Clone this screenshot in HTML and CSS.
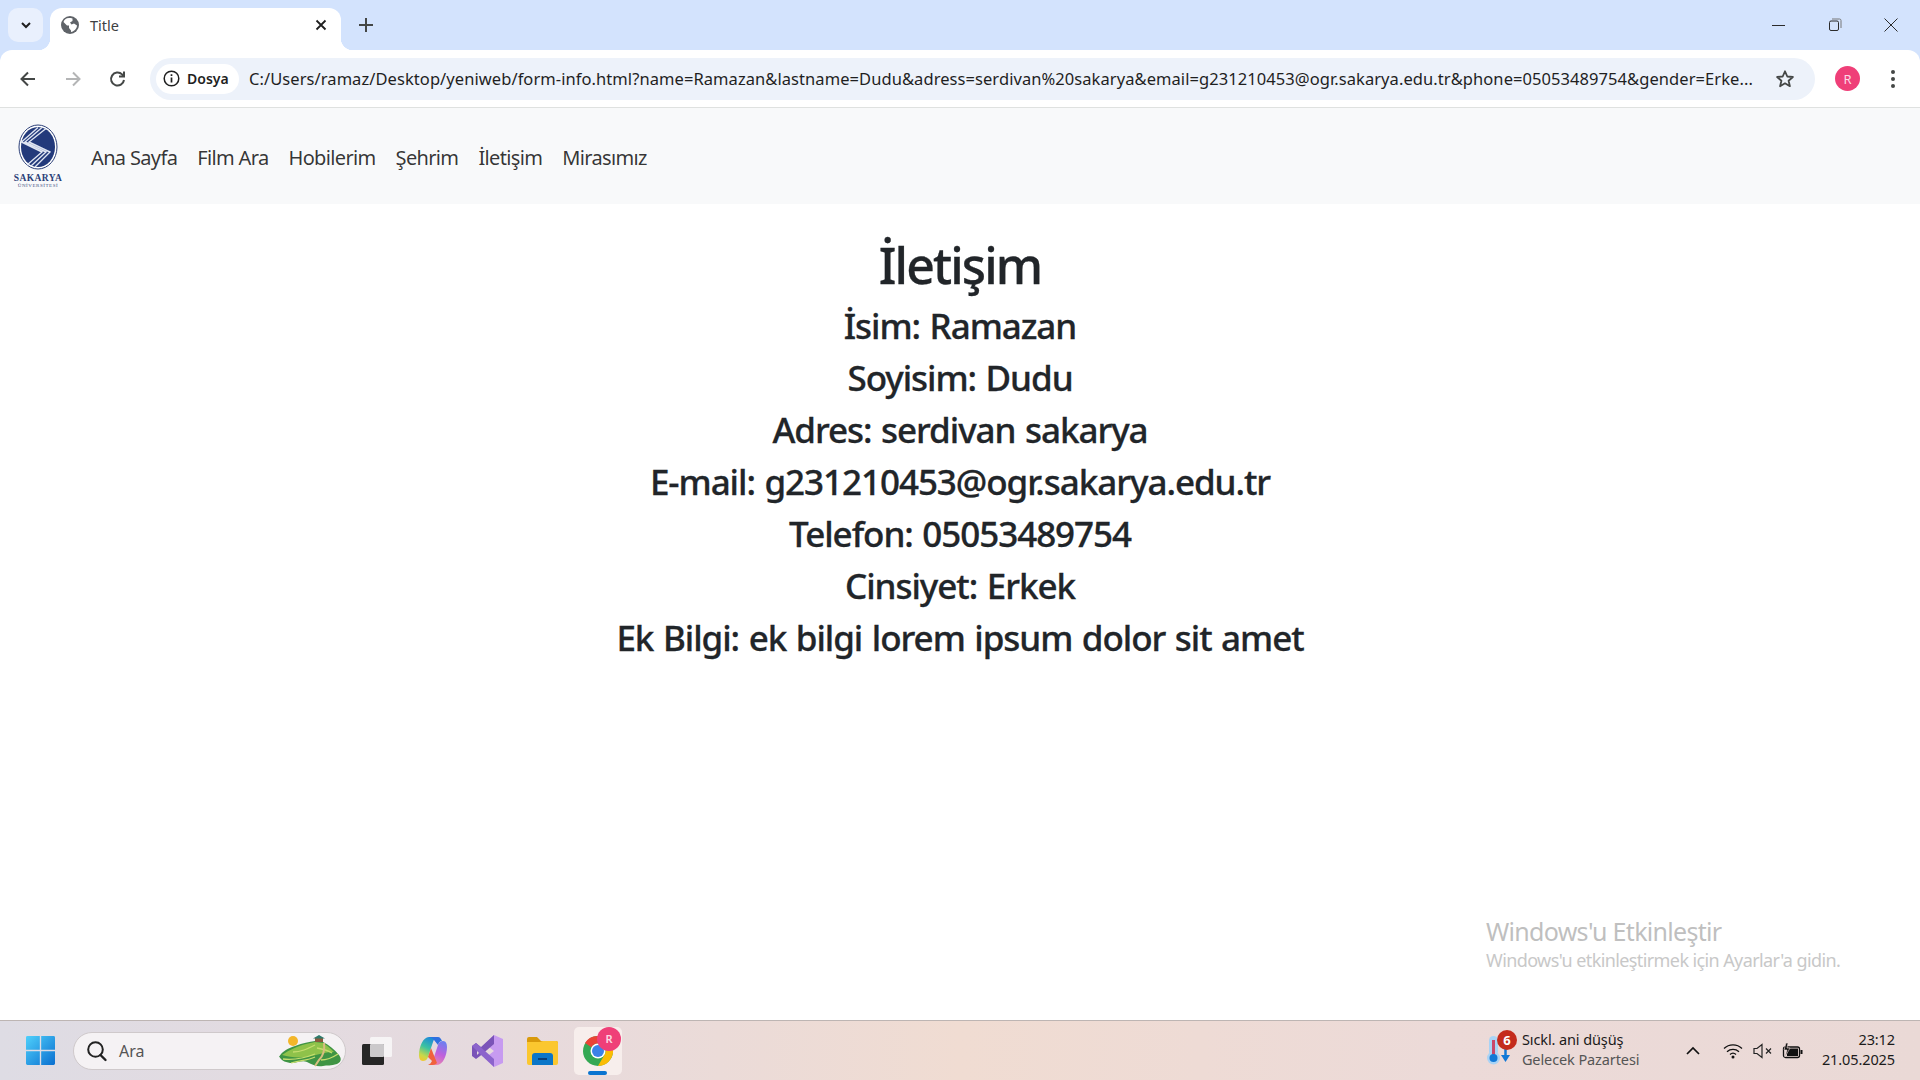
FILE: index.html
```html
<!DOCTYPE html>
<html lang="tr">
<head>
<meta charset="utf-8">
<title>Title</title>
<link rel="stylesheet" href="styles.css">
</head>
<body>
<div class="browser">
  <div class="tabstrip">
    <button class="tabsearch"><svg width="14" height="14" viewBox="0 0 14 14"><path d="M3 5l4 4 4-4" fill="none" stroke="#1f1f1f" stroke-width="2"/></svg></button>
    <div class="tab">
      <svg class="globe" width="18" height="18" viewBox="0 0 18 18"><circle cx="9" cy="9" r="9" fill="#5f6368"/><path d="M8 2C5 2 3 4 2.500 6L6 9.500 8 9.500 8 12 10 14.500 10 16C13 15.500 16 12.500 16 9.500L13 7.500 10.500 8.500 9 6.500 11.500 5 11.500 2.500C10.500 2 9 2 8 2Z" fill="#fff"/></svg>
      <span class="tabtitle">Title</span>
      <svg class="tabclose" width="12" height="12" viewBox="0 0 12 12"><path d="M1.500 1.500l9 9M10.500 1.500l-9 9" stroke="#1f1f1f" stroke-width="1.800"/></svg>
    </div>
    <svg class="newtab" width="14" height="14" viewBox="0 0 14 14"><path d="M7 0v14M0 7h14" stroke="#444746" stroke-width="2"/></svg>
    <div class="winctl">
      <svg width="14" height="14" viewBox="0 0 14 14"><path d="M0 7.500h13" stroke="#2b2b2b" stroke-width="1"/></svg>
      <svg width="14" height="14" viewBox="0 0 14 14"><rect x="1.500" y="3" width="9" height="9.500" rx="1.500" fill="none" stroke="#2b2b2b"/><path d="M4 1h7.500a1.500 1.500 0 0 1 1.500 1.500V10" fill="none" stroke="#777"/></svg>
      <svg width="14" height="14" viewBox="0 0 14 14"><path d="M.5.500l13 13M13.500.500l-13 13" stroke="#2b2b2b"/></svg>
    </div>
  </div>
  <div class="toolbar">
    <svg class="navicon" width="20" height="20" viewBox="0 0 20 20"><path d="M17 10H4M10 3.500L3.500 10l6.500 6.500" fill="none" stroke="#444746" stroke-width="2"/></svg>
    <svg class="navicon" width="20" height="20" viewBox="0 0 20 20"><path d="M3 10h13M10 3.500l6.500 6.500-6.500 6.500" fill="none" stroke="#b4b5b6" stroke-width="2"/></svg>
    <svg class="navicon" width="20" height="20" viewBox="0 0 20 20"><path d="M16 11a6.500 6.500 0 1 1-1.900-5.600L16 7.300M16 2.500v5h-5" fill="none" stroke="#444746" stroke-width="2"/></svg>
    <div class="omnibox">
      <div class="chip">
        <svg width="17" height="17" viewBox="0 0 17 17"><circle cx="8.500" cy="8.500" r="7.300" fill="none" stroke="#1f1f1f" stroke-width="1.500"/><path d="M8.500 7.500v5M8.500 4.300v1.800" stroke="#1f1f1f" stroke-width="1.700"/></svg>
        <span>Dosya</span>
      </div>
      <div class="url">C:/Users/ramaz/Desktop/yeniweb/form-info.html?name=Ramazan&amp;lastname=Dudu&amp;adress=serdivan%20sakarya&amp;email=g231210453@ogr.sakarya.edu.tr&amp;phone=05053489754&amp;gender=Erke...</div>
      <svg class="star" width="20" height="20" viewBox="0 0 20 20"><path d="M10 2.300l2.300 5.200 5.600.5-4.300 3.700 1.300 5.500L10 14.300l-4.900 2.900 1.300-5.500L2.100 8l5.600-.5z" fill="none" stroke="#444746" stroke-width="1.800" stroke-linejoin="round"/></svg>
    </div>
    <div class="avatar">R</div>
    <svg class="kebab" width="6" height="20" viewBox="0 0 6 20"><circle cx="3" cy="3" r="2" fill="#444746"/><circle cx="3" cy="10" r="2" fill="#444746"/><circle cx="3" cy="17" r="2" fill="#444746"/></svg>
  </div>
</div>

<nav class="navbar">
  <div class="logo">
    <svg width="40" height="46" viewBox="0 0 40 46"><ellipse cx="20" cy="23" rx="19" ry="22" fill="#fff" stroke="#2b3f78" stroke-width="1"/><ellipse cx="20" cy="23" rx="17" ry="20" fill="#233a7b"/><path d="M24 3.500L7 18l21 10-15 14M28 4.500L11 18l21 10-15 15M20 3.500L3.500 18 24 28 9 41" fill="none" stroke="#dfe5f2" stroke-width="1.400"/></svg>
    <span class="logo-name">SAKARYA</span>
    <span class="logo-sub">ÜNİVERSİTESİ</span>
  </div>
  <a class="navlink">Ana Sayfa</a>
  <a class="navlink">Film Ara</a>
  <a class="navlink">Hobilerim</a>
  <a class="navlink">Şehrim</a>
  <a class="navlink">İletişim</a>
  <a class="navlink">Mirasımız</a>
</nav>

<main class="content">
  <h1>İletişim</h1>
  <h3>İsim: Ramazan</h3>
  <h3>Soyisim: Dudu</h3>
  <h3>Adres: serdivan sakarya</h3>
  <h3>E-mail: g231210453@ogr.sakarya.edu.tr</h3>
  <h3>Telefon: 05053489754</h3>
  <h3>Cinsiyet: Erkek</h3>
  <h3>Ek Bilgi: ek bilgi lorem ipsum dolor sit amet</h3>
</main>

<div class="watermark">
  <div class="wm-title">Windows'u Etkinleştir</div>
  <div class="wm-sub">Windows'u etkinleştirmek için Ayarlar'a gidin.</div>
</div>

<footer class="taskbar">
  <svg class="start" width="29" height="29" viewBox="0 0 30 30">
    <defs><linearGradient id="win" x1="0" y1="0" x2="1" y2="1"><stop offset="0" stop-color="#4fd0fb"/><stop offset="1" stop-color="#0a6fd0"/></linearGradient></defs>
    <path d="M0 1.500A1.500 1.500 0 0 1 1.500 0H14.300V14.300H0zM15.700 0H28.500A1.500 1.500 0 0 1 30 1.500V14.300H15.700zM0 15.700H14.300V30H1.500A1.500 1.500 0 0 1 0 28.500zM15.700 15.700H30V28.500A1.500 1.500 0 0 1 28.500 30H15.700z" fill="url(#win)"/>
  </svg>
  <div class="search">
    <svg width="22" height="22" viewBox="0 0 22 22"><circle cx="9.500" cy="9.500" r="7.300" fill="none" stroke="#222" stroke-width="2"/><path d="M14.500 15l5 5" stroke="#222" stroke-width="2.400" stroke-linecap="round"/></svg>
    <span class="search-text">Ara</span>
    <svg class="scene" width="62" height="32" viewBox="0 0 62 32">
      <circle cx="14" cy="6" r="5" fill="#f3b62a"/>
      <path d="M0 22C3 16 10 13 16 11 24 8 30 7 36 6l8 1C50 10 56 15 60 20c3 4 2 7-2 9-6 2-10 1-14 2-6 1-10-1-16-4-5-2-10 1-15 1-5 0-11-2-13-7z" fill="#3f9444"/>
      <path d="M3 20C10 15 20 10 36 7l8 1c5 3 8 6 11 9-8 0-14 2-22 4-10 2-20 2-30-1z" fill="#8fc24a"/>
      <path d="M4 24c10 1 22-1 32-5M12 28c8-3 16-2 24-6M42 25c6 0 11-2 17-6M38 13c6 1 10 2 15 5M14 17c8 0 14-3 22-7" fill="none" stroke="#c5dd6e" stroke-width="1.300"/>
      <path d="M45 8c1 7-1 13-5 17l-4 6" fill="none" stroke="#d8bd80" stroke-width="2"/>
      <rect x="36" y="3" width="8" height="4" fill="#8a5a3c"/>
      <path d="M34 3.500l6-3.500 6 3.500z" fill="#2d7a6b"/>
    </svg>
  </div>
  <svg class="tb-icon taskview" width="30" height="28" viewBox="0 0 30 28"><rect x="8" y="0" width="22" height="20" rx="1.500" fill="#f6f4f5"/><rect x="0" y="7" width="22" height="21" rx="1.500" fill="#262626"/><rect x="8" y="7" width="14" height="13" rx="1" fill="#cbc9cb"/></svg>
  <svg class="tb-icon copilot" width="28" height="30" viewBox="0 0 28 30">
    <defs>
      <linearGradient id="co1" x1=".6" y1="0" x2=".2" y2="1"><stop offset="0" stop-color="#1c86dc"/><stop offset=".45" stop-color="#3cc3a0"/><stop offset=".8" stop-color="#c8d84a"/><stop offset="1" stop-color="#f2c830"/></linearGradient>
      <linearGradient id="co2" x1=".7" y1="0" x2=".3" y2="1"><stop offset="0" stop-color="#6d7ef0"/><stop offset=".5" stop-color="#c060dc"/><stop offset="1" stop-color="#f08aa8"/></linearGradient>
    </defs>
    <path d="M10 1h9c-3 0-4 2-5 5L9 21c-1 3-3 4-5 4-3 0-4-3-4-6C0 11 4 1 10 1z" fill="url(#co1)"/>
    <path d="M18 29H9c3 0 4-2 5-5l5-15c1-3 3-4 5-4 3 0 4 3 4 6 0 8-4 18-10 18z" fill="url(#co2)"/>
    <path d="M10 1h9c2 0 3 2 4 4-2 0-3 1-4 4l-4-5c-1-2-3-3-5-3z" fill="#2f6fe0"/>
    <path d="M9 21l3-9 6 15c-1 1-3 2-4 2H9c2-1 3-2 4-4z" fill="#f0623c"/>
  </svg>
  <svg class="tb-icon vs" width="31" height="32" viewBox="0 0 31 32"><path d="M22 0l9 4v24l-9 4-9-9 9-7-9-7z" fill="#c79bf0"/><path d="M22 0v9L8 21l-4 3-4-3V11l4-3 5 4zM5 12v8l4-4z" fill="#7a53b8"/><path d="M4 8l18 16v8L9 20 0 11z" fill="#8c64cc"/></svg>
  <svg class="tb-icon folder" width="31" height="28" viewBox="0 0 31 28"><path d="M0 2a2 2 0 0 1 2-2h8l4 4h15a2 2 0 0 1 2 2v4H0z" fill="#d99a0b"/><path d="M0 5h13l3-1h13a2 2 0 0 1 2 2v20a2 2 0 0 1-2 2H2a2 2 0 0 1-2-2z" fill="#fbc72f"/><path d="M5 19a3 3 0 0 1 3-3h15a3 3 0 0 1 3 3v9H5z" fill="#0b76c8"/><path d="M11 22h9" stroke="#083f78" stroke-width="2"/></svg>
  <div class="chrome-tile">
    <svg width="30" height="30" viewBox="0 0 30 30"><circle cx="15" cy="15" r="15" fill="#34a853"/><path d="M15 0a15 15 0 0 1 13 7.500H15a7.500 7.500 0 0 0-6.500 3.750L2 7A15 15 0 0 1 15 0z" fill="#ea4335"/><path d="M28 7.500A15 15 0 0 1 15 30l6.500-11.250A7.500 7.500 0 0 0 15 7.500z" fill="#fbbc04"/><circle cx="15" cy="15" r="7.500" fill="#fff"/><circle cx="15" cy="15" r="6" fill="#3b82e8"/></svg>
    <span class="chrome-badge">R</span>
    <span class="indicator"></span>
  </div>
  <div class="tray">
    <div class="weather">
      <svg width="24" height="30" viewBox="0 0 24 30"><rect x="2" y="0" width="9" height="20" rx="4.500" fill="#a9d3f5"/><circle cx="6.500" cy="22" r="6.500" fill="#a9d3f5"/><rect x="5" y="4" width="3" height="16" fill="#c9466a"/><circle cx="6.500" cy="22" r="4" fill="#1278d6"/><path d="M18.500 12v9" stroke="#1278d6" stroke-width="2.500"/><path d="M14 19h9l-4.500 7z" fill="#1278d6"/></svg>
      <span class="weather-badge">6</span>
      <div class="weather-text"><span class="wt1">Sıckl. ani düşüş</span><span class="wt2">Gelecek Pazartesi</span></div>
    </div>
    <svg class="chev" width="14" height="9" viewBox="0 0 14 9"><path d="M1 8l6-6 6 6" fill="none" stroke="#111" stroke-width="1.700"/></svg>
    <svg class="wifi" width="20" height="16" viewBox="0 0 20 16"><path d="M1 5.500a13 13 0 0 1 18 0M4 8.700a9 9 0 0 1 12 0M7 11.500a4.500 4.500 0 0 1 6 0" fill="none" stroke="#111" stroke-width="1.300"/><circle cx="10" cy="14" r="1.500" fill="#111"/></svg>
    <svg class="spk" width="20" height="16" viewBox="0 0 20 16"><path d="M1 5.500h3L9 1.500v13L4 10.500H1z" fill="none" stroke="#222" stroke-width="1.200"/><path d="M13 5.500l5 5M18 5.500l-5 5" stroke="#222" stroke-width="1.200"/></svg>
    <svg class="bat" width="21" height="16" viewBox="0 0 21 16"><rect x="1.500" y="4" width="16" height="10.500" rx="2" fill="none" stroke="#111" stroke-width="1.300"/><rect x="5" y="5.500" width="11" height="7.500" fill="#111"/><rect x="18.500" y="7" width="2" height="4" fill="#111"/><path d="M4 0L2 7h3L3 14l5-9H5l1-5z" fill="#111" stroke="#ecd9d6" stroke-width=".6"/></svg>
    <div class="clock"><span>23:12</span><span>21.05.2025</span></div>
  </div>
</footer>
</body>
</html>
```

FILE: styles.css
```css
* { box-sizing: border-box; }
html, body { margin: 0; height: 100%; }
body {
  display: flex;
  flex-direction: column;
  height: 1080px;
  overflow: hidden;
  font-family: "Noto Sans", "Open Sans", sans-serif;
  color: #212529;
  background: #fff;
  position: relative;
}
.browser { background: #d3e3fd; flex: none; border-bottom: 1px solid #dfe1e0; }
.tabstrip { height: 50px; display: flex; align-items: flex-start; padding: 8px 0 0 8px; position: relative; }
.tabsearch { width: 35px; height: 34px; border: 0; border-radius: 10px; background: #e9f0fd; display: flex; align-items: center; justify-content: center; padding: 0; }
.tab { position: relative; margin-left: 7px; width: 291px; height: 42px; background: #fff; border-radius: 12px 12px 0 0; display: flex; align-items: center; padding: 0 14px 8px 11px; }
.tab::before, .tab::after { content: ""; position: absolute; bottom: 0; width: 12px; height: 12px; }
.tab::before { left: -12px; background: radial-gradient(circle at 0 0, transparent 12px, #fff 12.500px); }
.tab::after { right: -12px; background: radial-gradient(circle at 100% 0, transparent 12px, #fff 12.500px); }
.globe { flex: none; }
.tabtitle { margin-left: 11px; font-size: 14.500px; color: #3c4043; flex: 1; }
.tabclose { flex: none; }
.newtab { margin: 10px 0 0 18px; flex: none; }
.winctl { margin-left: auto; display: flex; gap: 42px; padding: 10px 22px 0 0; }
.toolbar { height: 57px; background: #fff; border-radius: 12px 12px 0 0; display: flex; align-items: center; padding: 0 0 0 18px; }
.navicon { flex: none; margin-right: 25px; }
.navicon:nth-child(3) { margin-right: 22px; }
.omnibox { width: 1665px; height: 42px; background: #edf2fa; border-radius: 21px; display: flex; align-items: center; padding: 0 20px 0 6px; flex: none; }
.chip { height: 30px; width: 83px; background: #fff; border-radius: 15px; display: flex; align-items: center; gap: 7px; padding-left: 7px; font-size: 14px; font-weight: 600; color: #1f1f1f; flex: none; }
.url { margin-left: 10px; flex: 1; font-size: 16.500px; letter-spacing: .07px; color: #1f1f1f; white-space: nowrap; overflow: hidden; }
.star { flex: none; }
.avatar { margin-left: 20px; width: 25px; height: 25px; border-radius: 50%; background: #ef3f78; color: #fbd9e4; font-size: 13px; display: flex; align-items: center; justify-content: center; flex: none; }
.kebab { margin-left: 30px; flex: none; }

.navbar { height: 96px; background: #f8f9fa; display: flex; align-items: center; padding: 0 13px 0 14px; flex: none; }
.logo { width: 48px; margin-right: 19px; display: flex; flex-direction: column; align-items: center; flex: none; }
.logo-name { font-family: "Liberation Serif", serif; font-weight: 700; font-size: 9.500px; line-height: 10px; letter-spacing: .4px; color: #2b3f78; margin-top: 3px; white-space: nowrap; }
.logo-sub { font-family: "Liberation Serif", serif; font-size: 5px; line-height: 5px; letter-spacing: .55px; color: #3f5084; white-space: nowrap; }
.navlink { padding: 10px; font-size: 20px; line-height: 30px; color: rgba(0,0,0,.8); letter-spacing: -.65px; margin-top: 4px; }

.content { flex: 1; padding-top: 31px; text-align: center; }
h1, h3 { margin: 0 0 10px; font-weight: 500; line-height: 1.2; -webkit-text-stroke: .3px currentColor; }
h1 { font-size: 50px; letter-spacing: -1.9px; }
h3 { font-size: 35px; letter-spacing: -1.05px; word-spacing: 1.500px; }

.watermark { position: absolute; left: 1486px; top: 914px; color: #bfbfbf; }
.wm-title { font-size: 25px; line-height: 34px; letter-spacing: -.7px; }
.wm-sub { font-size: 18px; line-height: 24px; letter-spacing: -.6px; color: #c8c8c8; }

.taskbar { height: 60px; flex: none; display: flex; align-items: center; padding-left: 26px; border-top: 1px solid #bdb5b3; background: linear-gradient(90deg, #dedce4 0%, #e6dade 25%, #f0dcd2 50%, #ecdad8 75%, #ead9d6 100%); }
.start { flex: none; margin-right: 18px; }
.search { width: 273px; height: 38px; border-radius: 19px; background: #f5f2f4; border: 1px solid #cfc9cb; display: flex; align-items: center; padding-left: 12px; flex: none; }
.search-text { margin-left: 11px; font-size: 16px; color: #555; flex: 1; }
.scene { flex: none; margin-right: 4px; }
.tb-icon { flex: none; }
.taskview { margin-left: 16px; }
.copilot { margin-left: 27px; }
.vs { margin-left: 25px; }
.folder { margin-left: 24px; }
.chrome-tile { position: relative; margin-left: 16px; width: 48px; height: 48px; border-radius: 5px; background: #f7eeec; display: flex; align-items: center; justify-content: center; flex: none; }
.chrome-badge { position: absolute; left: 23px; top: 0; width: 24px; height: 24px; border-radius: 50%; background: #ef3f78; color: #fbd9e4; font-size: 11px; font-weight: 600; display: flex; align-items: center; justify-content: center; }
.indicator { position: absolute; left: 14px; bottom: 0; width: 19px; height: 4px; border-radius: 2px; background: #0a74d0; }
.tray { margin-left: auto; display: flex; align-items: center; padding-right: 25px; }
.weather { position: relative; display: flex; align-items: center; width: 199px; }
.weather svg { flex: none; margin-right: 11px; }
.weather-badge { position: absolute; left: 10px; top: -3px; width: 20px; height: 20px; border-radius: 50%; background: #c42b1c; color: #fff; font-size: 13px; font-weight: 700; display: flex; align-items: center; justify-content: center; }
.weather-text, .clock { display: flex; flex-direction: column; font-size: 14.500px; line-height: 20px; letter-spacing: -.1px; white-space: nowrap; margin-top: -4px; }
.wt1 { color: #1b1b1b; }
.wt2 { color: #555; }
.chev { flex: none; }
.wifi { margin-left: 23px; flex: none; }
.spk { margin-left: 10px; flex: none; }
.bat { margin-left: 9px; flex: none; }
.clock { margin-left: 19px; text-align: right; color: #1b1b1b; }
```
